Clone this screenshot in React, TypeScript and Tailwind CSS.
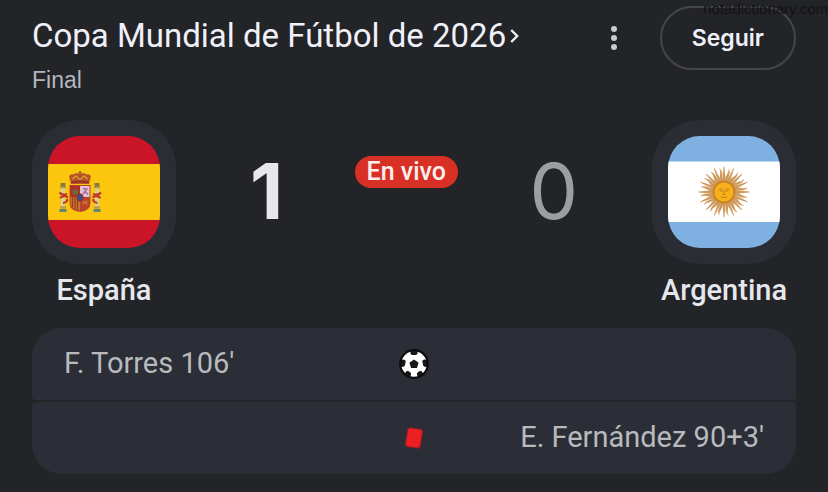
import type { ReactNode } from 'react';
import clsx from 'clsx';

interface MatchEvent {
  id: number;
  side: 'home' | 'away';
  player: string;
  minute: string;
  kind: 'goal' | 'red';
}

const EVENTS: MatchEvent[] = [
  { id: 1, side: 'home', player: 'F. Torres', minute: "106'", kind: 'goal' },
  { id: 2, side: 'away', player: 'E. Fernández', minute: "90+3'", kind: 'red' },
];

const RAYS = Array.from({ length: 32 }, (_, i) => i * 11.25);

function SpainFlag() {
  return (
    <svg viewBox="0 0 112 112" className="size-28 rounded-[32px]" aria-hidden="true">
      <rect width="112" height="112" fill="#ca1428" />
      <rect y="28" width="112" height="56" fill="#fcc60c" />
      {/* pillars */}
      {[15, 49].map((x) => (
        <g key={x}>
          <rect x={x - 2} y="51" width="4" height="21" fill="#d9cf9c" />
          <rect x={x - 2.5} y="47" width="5" height="4" fill="#8a7a3a" />
          <rect x={x - 3} y="50.5" width="6" height="1.8" fill="#b5993c" />
          <rect x={x - 3} y="70.5" width="6" height="2" fill="#b5993c" />
          <rect x={x - 3.5} y="73" width="7" height="3" fill="#5f8577" />
        </g>
      ))}
      <path d="M11.5 56.5q3 3.500 7.500 1.500M12 62q4-3.500 8-.5M19 63q1 3-4 4" fill="none" stroke="#c0392b" strokeWidth="2.200" />
      <path d="M53 56.500q-3 3.500-8 1.500M52.500 62q-4-3.500-8-.5M45.500 63q-1 3 4 4" fill="none" stroke="#c0392b" strokeWidth="2.200" />
      {/* crown */}
      <path d="M23 48L21.500 42Q20 38 25 38.500Q28 36.500 32 38Q36 36.500 39 38.500Q44 38 42.500 42L41 48Z" fill="#b6532a" />
      <path d="M32 35v4M30.500 36.500h3" stroke="#8a5a22" strokeWidth="1.200" />
      <path d="M24.500 43l3-3 4.500 3.500 4.500-3.500 3 3" fill="none" stroke="#e0a32e" strokeWidth="1.200" />
      <path d="M23.500 46.500q8.500-2 17 0" fill="none" stroke="#8c2f1f" strokeWidth="1.600" />
      {/* shield */}
      <path d="M21.500 49h21v18q0 8-10.500 9-10.500-1-10.500-9z" fill="#b5462e" />
      <path d="M22.500 50h9.500v11h-9.500z" fill="#ad3029" />
      <path d="M24.500 58.500v-4h1.200v-1.500h3.200v1.500h1.200v4z" fill="#6d6c38" />
      <path d="M32 50h9.500v11h-9.500z" fill="#e3c3d2" />
      <path d="M35 52.500l4 .5-2 2.500 3 3M35 58l2-2.500" fill="none" stroke="#a068a0" strokeWidth="1.300" />
      <path d="M22.500 61h9.500v13.500q-9.500-1-9.500-8z" fill="#c47a28" />
      <path d="M24.500 61v10.500M27 61v12.500M29.500 61v13" stroke="#a53525" strokeWidth="1.200" />
      <path d="M32 61h9.500v6q0 7-9.500 7.500z" fill="#b94429" />
      <path d="M34.500 64l5 5M39.500 64l-5 5M34.500 66.500h5" stroke="#d18b2e" strokeWidth=".8" />
      <ellipse cx="32" cy="61.500" rx="3.200" ry="3.800" fill="#3d4e82" stroke="#9e3028" strokeWidth="1" />
    </svg>
  );
}

function ArgentinaFlag() {
  return (
    <svg viewBox="0 0 112 112" className="size-28 rounded-[32px]" aria-hidden="true">
      <rect width="112" height="112" fill="#7fb0e2" />
      <rect y="25.500" width="112" height="60.500" fill="#fff" />
      {RAYS.map((a, i) => (
        <path
          key={a}
          d={i % 2 ? 'M54.600 46Q53.700 41 55.600 38Q57 35 56 31.500Q58.700 35 57.800 39Q56.900 42 57.400 46z' : 'M54.300 46L55.600 30.500H56.400L57.700 46z'}
          fill="#d09a5c"
          transform={`rotate(${a} 56 56)`}
        />
      ))}
      <circle cx="56" cy="56" r="10.500" fill="#f8b01a" stroke="#c98225" strokeWidth="1.800" />
      <path d="M51 53.500q2-1.500 4 0M57 53.500q2-1.500 4 0M51.500 55h3M57.500 55h3M56 54v4M54.500 58.500h3M53 61q3 1.200 6 0" fill="none" stroke="#c07a1c" strokeWidth=".9" />
    </svg>
  );
}

function Ball() {
  return (
    <svg viewBox="0 0 30 30" className="size-[30px]" role="img" aria-label="Gol">
      <circle cx="15" cy="15" r="14" fill="#fff" />
      <g fill="#17171a">
        <path d="M15 10.500L19.600 13.800L17.900 19H12.100L10.400 13.800Z" />
        <path d="M11.500 1H18.500V5L17 6H13L11.500 5Z" />
        <path d="M1.300 11L5 10.500L6.800 12L5.800 16.500L4.500 17.800L1.800 18Z" />
        <path d="M28.700 11L25 10.500L23.200 12L24.200 16.500L25.500 17.800L28.200 18Z" />
        <path d="M5.500 25.500L7 22.500L9 21.800L12 24L12 26L10.500 28.500Z" />
        <path d="M24.500 25.500L23 22.500L21 21.800L18 24L18 26L19.500 28.500Z" />
      </g>
      <circle cx="15" cy="15" r="13.800" fill="none" stroke="#0b0b0d" strokeWidth="2.200" />
    </svg>
  );
}

function RedCard() {
  return (
    <svg viewBox="0 0 30 30" className="size-[30px]" role="img" aria-label="Tarjeta roja">
      <rect x="7.500" y="5.500" width="15" height="19" rx="3" fill="#ec1f24" stroke="#8f1d22" strokeWidth="1" transform="rotate(9 15 15)" />
    </svg>
  );
}

function Team({ name, children }: { name: string; children: ReactNode }) {
  return (
    <div className="flex w-36 shrink-0 flex-col items-center gap-2">
      <div className="rounded-[48px] bg-[#2a2d33] p-4">{children}</div>
      <p className="text-[29px] leading-9 font-medium text-[#e6e7ec]">{name}</p>
    </div>
  );
}

export default function App() {
  return (
    <main className="relative min-h-screen bg-[#232428] px-8 pt-1.5 pb-5 font-['Roboto',sans-serif]">
      <header className="flex items-start">
        <div className="grow pt-2.5">
          <h1 className="text-[33px] leading-10 text-[#f0f0f8]">
            <a href="#torneo" className="flex items-center gap-1">
              Copa Mundial de Fútbol de 2026
              <svg viewBox="0 0 9 14" className="h-3.5 w-[9px]" fill="none" stroke="currentColor" strokeWidth="2.400" aria-hidden="true">
                <path d="M1.200 1L7.200 7L1.200 13" />
              </svg>
            </a>
          </h1>
          <p className="mt-2 font-['Liberation_Sans',sans-serif] text-[23px] leading-8 text-[#b4b5be]">Final</p>
        </div>
        <button type="button" aria-label="Más opciones" className="mr-[30px] flex h-16 w-8 items-center justify-center">
          <svg viewBox="0 0 6 24" className="h-6 w-1.5" fill="#cacad3">
            <circle cx="3" cy="3" r="3" />
            <circle cx="3" cy="12" r="3" />
            <circle cx="3" cy="21" r="3" />
          </svg>
        </button>
        <button type="button" className="h-16 rounded-full border-2 border-[#45464a] px-[30px] font-['Inter',sans-serif] text-[23px] font-semibold text-[#f0f0f8]">
          Seguir
        </button>
      </header>

      <section className="mt-6 flex items-start">
        <Team name="España">
          <SpainFlag />
        </Team>
        <div className="flex h-36 grow items-center justify-between px-[74px] pb-0.5 font-['Inter',sans-serif] text-[77px] leading-none">
          <span className="font-bold text-[#e8e8ea]">1</span>
          <span className="mb-[38px] rounded-full bg-[#d93025] px-3 font-['Roboto',sans-serif] text-[25px] leading-8 font-medium text-[#fbeeee]">
            En vivo
          </span>
          <span className="text-[#9d9ea0]">0</span>
        </div>
        <Team name="Argentina">
          <ArgentinaFlag />
        </Team>
      </section>

      <ul className="mt-5 space-y-0.5 overflow-hidden rounded-[30px]">
        {EVENTS.map((e) => (
          <li key={e.id} className="grid h-18 grid-cols-[1fr_auto_1fr] items-center rounded-sm bg-[#2b2e36] px-8 text-[29px] leading-9 text-[#b9babd]">
            <span className={clsx('pb-0.5', e.side === 'away' && 'col-start-3 row-start-1 text-right')}>
              {e.player} {e.minute}
            </span>
            <span className="col-start-2 row-start-1">{e.kind === 'goal' ? <Ball /> : <RedCard />}</span>
          </li>
        ))}
      </ul>

      <span className="absolute top-0 right-0 font-['Liberation_Sans',sans-serif] text-[15px] leading-[17px] text-[#111214]">
        notadictionary.com
      </span>
    </main>
  );
}
